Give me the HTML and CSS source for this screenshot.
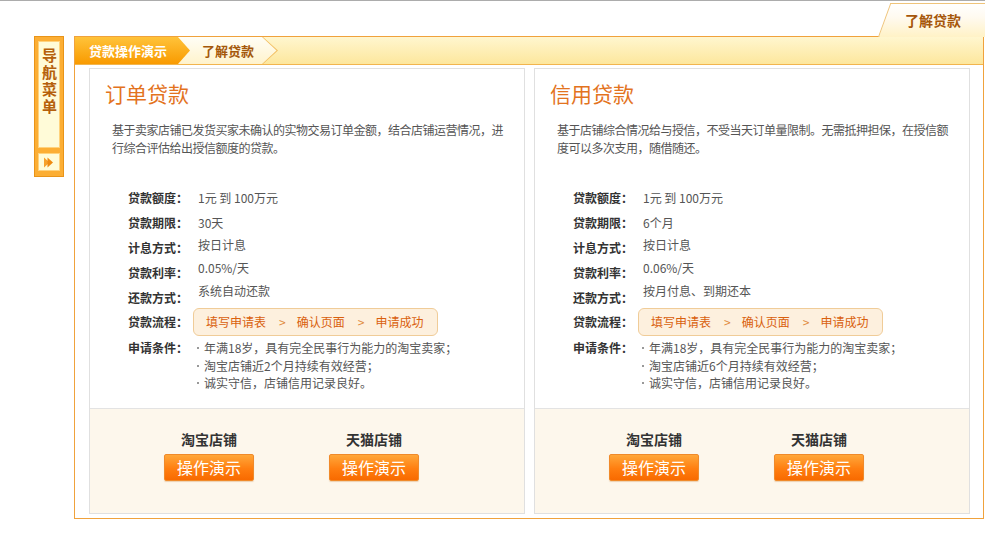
FILE: index.html
```html
<!DOCTYPE html>
<html lang="zh-CN">

<head>
    <meta charset="UTF-8">
    <meta name="viewport" content="width=device-width, initial-scale=1.0">
    <title>了解贷款</title>
    <link rel="stylesheet" href="styles.css">
</head>

<body>
<div class="top">
    <div class="top-tab"><span>了解贷款</span></div>
</div>

<div class="wrap">
    <div class="nav">
        <div class="nav-title"><span>导航菜单</span></div>
        <div class="nav-btn">
            <svg width="12" height="11" viewBox="0 0 12 11">
                <polygon points="1,0.5 6.5,5.5 1,10.5" fill="#f7a12a"/>
                <polygon points="4.5,0.5 10,5.5 4.5,10.5" fill="#ee8a10"/>
            </svg>
        </div>
    </div>

    <div class="main">
        <div class="crumbs">
            <span class="crumb crumb-on">贷款操作演示</span>
            <span class="crumb crumb-cur"><span>了解贷款</span></span>
        </div>

        <div class="cards">
            <div class="card">
                <div class="card-top">
                    <h2 class="card-title">订单贷款</h2>
                    <p class="card-desc">基于卖家店铺已发货买家未确认的实物交易订单金额，结合店铺运营情况，进行综合评估给出授信额度的贷款。</p>
                    <div class="spec">
                        <div class="row"><span class="lbl">贷款额度：</span><span class="val">1元 到 100万元</span></div>
                        <div class="row"><span class="lbl">贷款期限：</span><span class="val">30天</span></div>
                        <div class="row"><span class="lbl">计息方式：</span><span class="val up1">按日计息</span></div>
                        <div class="row"><span class="lbl">贷款利率：</span><span class="val up2">0.05%/天</span></div>
                        <div class="row"><span class="lbl">还款方式：</span><span class="val up3">系统自动还款</span></div>
                        <div class="row row-flow"><span class="lbl">贷款流程：</span>
                            <div class="flow">填写申请表<span class="sep">&gt;</span>确认页面<span class="sep">&gt;</span>申请成功</div>
                        </div>
                        <div class="row row-cond"><span class="lbl">申请条件：</span>
                            <ul class="cond">
                                <li>年满18岁，具有完全民事行为能力的淘宝卖家；</li>
                                <li>淘宝店铺近2个月持续有效经营；</li>
                                <li>诚实守信，店铺信用记录良好。</li>
                            </ul>
                        </div>
                    </div>
                </div>
                <div class="card-foot">
                    <div class="shop"><div class="shop-name">淘宝店铺</div><a class="btn" href="#">操作演示</a></div>
                    <div class="shop"><div class="shop-name">天猫店铺</div><a class="btn" href="#">操作演示</a></div>
                </div>
            </div>

            <div class="card">
                <div class="card-top">
                    <h2 class="card-title">信用贷款</h2>
                    <p class="card-desc">基于店铺综合情况给与授信，不受当天订单量限制。无需抵押担保，在授信额度可以多次支用，随借随还。</p>
                    <div class="spec">
                        <div class="row"><span class="lbl">贷款额度：</span><span class="val">1元 到 100万元</span></div>
                        <div class="row"><span class="lbl">贷款期限：</span><span class="val">6个月</span></div>
                        <div class="row"><span class="lbl">计息方式：</span><span class="val up1">按日计息</span></div>
                        <div class="row"><span class="lbl">贷款利率：</span><span class="val up2">0.06%/天</span></div>
                        <div class="row"><span class="lbl">还款方式：</span><span class="val up3">按月付息、到期还本</span></div>
                        <div class="row row-flow"><span class="lbl">贷款流程：</span>
                            <div class="flow">填写申请表<span class="sep">&gt;</span>确认页面<span class="sep">&gt;</span>申请成功</div>
                        </div>
                        <div class="row row-cond"><span class="lbl">申请条件：</span>
                            <ul class="cond">
                                <li>年满18岁，具有完全民事行为能力的淘宝卖家；</li>
                                <li>淘宝店铺近6个月持续有效经营；</li>
                                <li>诚实守信，店铺信用记录良好。</li>
                            </ul>
                        </div>
                    </div>
                </div>
                <div class="card-foot">
                    <div class="shop"><div class="shop-name">淘宝店铺</div><a class="btn" href="#">操作演示</a></div>
                    <div class="shop"><div class="shop-name">天猫店铺</div><a class="btn" href="#">操作演示</a></div>
                </div>
            </div>
        </div>
    </div>
</div>
</body>

</html>
```

FILE: styles.css
```css
html, body {
  margin: 0;
  overflow: hidden;
  background: #fff;
}
body {
  width: 985px;
  font-family: "Noto Sans CJK SC", "Liberation Sans", sans-serif;
  font-size: 12px;
  color: #555;
}
* {
  box-sizing: border-box;
}

/* top tab */
.top {
  height: 36px;
  border-top: 1px solid #acacac;
  display: flex;
  justify-content: flex-end;
}
.top-tab {
  position: relative;
  z-index: 2;
  width: 107px;
  height: 34px;
  margin-top: 2px;
}
.top-tab::before {
  content: '';
  position: absolute;
  top: 0;
  bottom: 0;
  left: 0;
  right: -20px;
  border: 1px solid #efc47a;
  border-bottom: none;
  background: linear-gradient(#ffffff 0%, #fffaf0 40%, #fff2c6 100%);
  transform: skewX(-20deg);
  transform-origin: 0 100%;
}
.top-tab span {
  position: relative;
  display: block;
  padding-left: 27px;
  line-height: 34px;
  font-size: 14px;
  font-weight: bold;
  color: #a6570b;
}

/* layout */
.wrap {
  display: flex;
  align-items: flex-start;
  padding-left: 34px;
}

/* nav */
.nav {
  width: 30px;
  border: 1px solid #e99419;
  background: #fcae34;
  padding: 4px 3px 5px;
}
.nav-title {
  height: 107px;
  background: #fffbd8;
  border: 1px solid #ffd27c;
  padding-top: 6px;
  display: flex;
  justify-content: center;
  align-items: flex-start;
}
.nav-title span {
  writing-mode: vertical-rl;
  font-size: 15px;
  line-height: 16px;
  letter-spacing: 2px;
  font-weight: bold;
  color: #b5600b;
}
.nav-btn {
  height: 18px;
  margin-top: 5px;
  background: #fffbd8;
  border: 1px solid #ffd27c;
  display: flex;
  align-items: center;
  justify-content: center;
}

/* main box */
.main {
  width: 910px;
  margin-left: 10px;
  border: 1px solid #f0a23c;
}
.crumbs {
  height: 28px;
  display: flex;
  background: linear-gradient(#fff6cf, #fde79d);
  border-bottom: 1px solid #f2b54e;
}
.crumb {
  height: 27px;
  line-height: 27px;
  font-weight: bold;
  font-size: 13px;
}
.crumb-on {
  position: relative;
  z-index: 1;
  width: 115px;
  padding-left: 14px;
  color: #fff;
  background: linear-gradient(#ffc33a, #f99a00);
  clip-path: polygon(0 0, 103px 0, 115px 50%, 103px 100%, 0 100%);
}
.crumb-cur {
  position: relative;
  width: 100px;
  margin-left: -12px;
  color: #a4580b;
  background: #f2bf62;
  clip-path: polygon(0 0, 85px 0, 100px 50%, 85px 100%, 0 100%);
}
.crumb-cur::before {
  content: '';
  position: absolute;
  top: 0;
  left: 0;
  right: 0;
  bottom: 0;
  background: linear-gradient(#fffef6, #fff3cc);
  clip-path: polygon(0 0, 84px 0, 98.5px 50%, 84px 100%, 0 100%);
}
.crumb-cur span {
  position: relative;
  padding-left: 24px;
}

.cards {
  display: flex;
  gap: 9px;
  padding: 3px 13px 4px 14px;
}
.card {
  width: 436px;
  border: 1px solid #e0e0e0;
  background: #fff;
}
.card-top {
  height: 339px;
  padding: 10px 0 0 15px;
}
.card-title {
  margin: 0;
  font-size: 21px;
  line-height: 28px;
  font-weight: normal;
  color: #e3731e;
}
.card-desc {
  margin: 14px 0 0 7px;
  width: 398px;
  line-height: 18px;
  letter-spacing: -0.5px;
  color: #555;
}

.spec {
  margin-top: 28px;
  padding-left: 23px;
}
.row {
  display: flex;
  height: 25px;
  line-height: 25px;
}
.lbl {
  width: 70px;
  flex: none;
  font-weight: bold;
  color: #333;
}
.val {
  color: #555;
}
.up1 { margin-top: -3px; }
.up2 { margin-top: -5px; }
.up3 { margin-top: -7px; }

.row-flow {
  height: 28px;
  line-height: 28px;
  margin-top: -2px;
}
.flow {
  width: 245px;
  height: 28px;
  line-height: 26px;
  margin-left: -5px;
  padding-left: 12px;
  border: 1px solid #f0cc98;
  border-radius: 6px;
  background: #fdf0de;
  color: #d9600d;
}
.sep {
  margin: 0 11px 0 13px;
  color: #e08a3c;
}

.row-cond {
  height: auto;
  margin-top: 3px;
  line-height: 17.5px;
}
.cond {
  margin: 0;
  padding: 0;
  list-style: none;
}
.cond li {
  position: relative;
  padding-left: 6px;
  color: #555;
}
.cond li::before {
  content: '';
  position: absolute;
  left: -1px;
  top: 8px;
  width: 2px;
  height: 2px;
  background: #999;
}

/* foot */
.card-foot {
  height: 105px;
  border-top: 1px solid #e3e3e3;
  background: #fdf7ec;
  display: flex;
  gap: 75px;
  padding: 21px 0 0 74px;
}
.shop {
  width: 90px;
  text-align: center;
}
.shop-name {
  font-size: 14px;
  line-height: 18px;
  font-weight: bold;
  color: #333;
  margin-bottom: 6px;
}
.btn {
  display: block;
  height: 27px;
  line-height: 25px;
  border: 1px solid #f08a2a;
  border-radius: 2px;
  background: linear-gradient(#ffa73a, #ff7e10 55%, #f86a00);
  color: #fff;
  font-size: 16px;
  text-decoration: none;
  box-shadow: 0 1px 1px rgba(200, 120, 40, 0.3);
}
```
